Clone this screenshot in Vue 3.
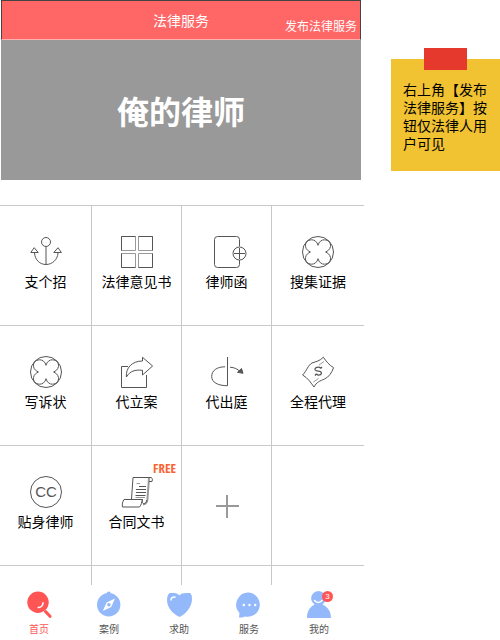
<script setup>
const services = [
  { icon: 'anchor', label: '支个招' },
  { icon: 'squares', label: '法律意见书' },
  { icon: 'letter', label: '律师函' },
  { icon: 'clover', label: '搜集证据' },
  { icon: 'clover', label: '写诉状' },
  { icon: 'share', label: '代立案' },
  { icon: 'rotate', label: '代出庭' },
  { icon: 'bill', label: '全程代理' },
  { icon: 'cc', label: '贴身律师' },
  { icon: 'scroll', label: '合同文书', tag: 'FREE' },
]

const tabs = [
  { icon: 'search', label: '首页', active: true },
  { icon: 'compass', label: '案例' },
  { icon: 'heart', label: '求助' },
  { icon: 'chat', label: '服务' },
  { icon: 'user', label: '我的', badge: 3 },
]
</script>

<template>
  <div class="page">
    <main class="phone">
      <header class="bar">
        <h1 class="bar-title">法律服务</h1>
        <a class="publish" href="#publish">发布法律服务</a>
      </header>
      <div class="banner">俺的律师</div>

      <div class="services">
        <button v-for="s in services" :key="s.label" class="cell" type="button">
          <svg v-if="s.icon === 'anchor'" class="icon" viewBox="0 0 32 32">
            <circle cx="16" cy="6" r="4.5" />
            <path d="M16 10.5V28.500M4.500 17C5 24 10 28.500 16 28.500S27.500 24 28 17M.8 16.500L4.200 11.700L8.200 16.500ZM23.800 16.500L28 11.700L31.400 16.500Z" />
          </svg>
          <svg v-else-if="s.icon === 'squares'" class="icon" viewBox="0 0 32 32">
            <path class="soft" d="M.5 .5h14v14h-14zM17.5 .5h14v14h-14zM.5 17.5h14v14h-14zM17.5 17.5h14v14h-14z" />
            <path d="M.5 14.5V.5H14.5M17.5 .5H31.5V14.5M.5 17.5V31.5H14.5M17.5 31.5H31.5V17.5" />
          </svg>
          <svg v-else-if="s.icon === 'letter'" class="icon wide" viewBox="0 0 40 32">
            <path d="M32.5 10.5V3.5a3 3 0 0 0-3-3H10.5a3 3 0 0 0-3 3V28.5a3 3 0 0 0 3 3H29.5a3 3 0 0 0 3-3V24" />
            <circle cx="32.5" cy="17.5" r="6.5" />
            <path d="M27 17.5H38M32.5 12V23" />
          </svg>
          <svg v-else-if="s.icon === 'clover'" class="icon" viewBox="0 0 32 32">
            <circle cx="16" cy="16" r="15.5" />
            <path d="M16 9.3C17 5.6 19.500 3.700 22.500 3.800C26.500 4 29 7 28.500 10.300C28 13.800 25.500 15 23.600 16C25.500 17 28 18.200 28.500 21.700C29 25 26.500 28 22.500 28.200C19.500 28.300 17 26.400 16 22.700C15 26.400 12.500 28.300 9.500 28.200C5.500 28 3 25 3.500 21.700C4 18.200 6.500 17 8.400 16C6.500 15 4 13.800 3.500 10.300C3 7 5.500 4 9.500 3.800C12.500 3.700 15 5.600 16 9.300Z" />
          </svg>
          <svg v-else-if="s.icon === 'share'" class="icon" viewBox="0 0 32 32">
            <path d="M7 10.5H.5V31.5H25.5V19" />
            <path d="M21.5 1.3L31.600 10L21.500 19V14.300C14 13.500 9 15 5.400 21C4.500 12 11 5 21.500 5Z" />
          </svg>
          <svg v-else-if="s.icon === 'rotate'" class="icon" viewBox="0 0 32 32">
            <path d="M16.5 1V29.700C7 29.700 .7 26.500 .7 20.500C.7 14.500 6 10.800 14 10.800M19 11.200C23.500 11.500 26.500 13 29 15.500" />
            <path class="solid" d="M32 17.3L26.500 16.300L30.500 12.500Z" />
          </svg>
          <svg v-else-if="s.icon === 'bill'" class="icon" viewBox="0 0 32 32">
            <path d="M.6 19C5 14.500 6 9 10 7C14 5.500 18 5 21.300 1.200C24 5 27 9 31.600 11.700C29.500 17 27 21 22.500 23C18 25 14.500 26 12 31C9 27 6 22 .6 19Z" />
            <path class="soft" d="M17 9L22 5.500M11.500 26L16.500 22.500" />
            <path class="mark" d="M18.8 12.300C17 10 12 11.500 13.200 14C14.400 16 18.500 14.300 19.300 16.500C20 19 16 20 14.500 17.800M18.800 12.300L20 10.800M14.500 17.800L13 19.500" />
          </svg>
          <svg v-else-if="s.icon === 'cc'" class="icon" viewBox="0 0 32 32">
            <circle cx="16" cy="16" r="15.5" />
            <text class="cc" x="16" y="21" text-anchor="middle">CC</text>
          </svg>
          <svg v-else class="icon" viewBox="0 0 32 32">
            <path class="soft thick" d="M28 2L26.5 22.500C26.500 26 25 28 22 28.500" />
            <path d="M10.5 23L12 1.500H29C31 1 32 3 31 5.500H28M3 23.500H21.500C20.500 26 20.500 29 18.500 31H1.500C1 28 1.500 26 3 23.500ZM21.500 23.500C20 29 25 29 26 24" />
            <path d="M18 10.5H25M15 13.500H25M15 16.500H25M14.500 19.500H24.500" />
            <path class="soft" d="M15.5 7.500H19M14.500 21.500H24" />
          </svg>
          <span class="label">{{ s.label }}</span>
          <span v-if="s.tag" class="tag">{{ s.tag }}</span>
        </button>
        <button class="cell add" type="button" aria-label="+">
          <svg class="plus" viewBox="0 0 24 24">
            <path d="M1 12H24M12 1V24" />
          </svg>
        </button>
        <div class="cell"></div>
        <div v-for="n in 4" :key="n" class="cell stub"></div>
      </div>

      <nav class="tabs">
        <a v-for="t in tabs" :key="t.label" class="tab" :class="{ active: t.active }" href="#">
          <svg v-if="t.icon === 'search'" class="tab-icon" viewBox="0 0 26 27">
            <circle cx="12" cy="11.300" r="10.700" />
            <path class="handle" d="M19.5 20.500L24 25.300" />
            <path class="cut" d="M17 11.800C17 14.800 15 16.600 12.200 16.400" />
          </svg>
          <svg v-else-if="t.icon === 'compass'" class="tab-icon" viewBox="0 0 26 27">
            <circle cx="12.7" cy="13.800" r="11.700" />
            <circle cx="12.7" cy="2.500" r="2" />
            <path class="hole" d="M19 7.500L15.200 16L6.800 20L10.600 11.600Z" />
            <circle cx="12.9" cy="13.800" r="1.800" />
          </svg>
          <svg v-else-if="t.icon === 'heart'" class="tab-icon" viewBox="0 0 26 27">
            <path d="M13.3 4.500C14.500 2.800 17 2 20 2H24C25.500 3 26 5 26 8C26 15 21 22.500 13.500 26C6 22.500 1 16 1 9C1 6 2 3.500 3.500 2H8C10.500 2 12.300 3 13.300 4.500Z" />
            <path class="cut" d="M5 9C5 7 6.500 5.800 9 6" />
          </svg>
          <svg v-else-if="t.icon === 'chat'" class="tab-icon" viewBox="0 0 26 27">
            <path d="M13.3 1.500A12.200 12.200 0 1 1 9 25.500C7 26.500 5 26.500 3 26.500L3.500 22A12.200 12.200 0 0 1 13.300 1.500Z" />
            <g class="hole">
              <circle cx="7.8" cy="14" r="1.200" />
              <circle cx="13.5" cy="14" r="1.200" />
              <circle cx="19.2" cy="14" r="1.200" />
            </g>
          </svg>
          <svg v-else class="tab-icon" viewBox="0 0 26 27">
            <path d="M1 27C1 20 4 16 8.500 13.500A7.300 7.300 0 1 1 16.500 13.500C21.500 16 25 20 25 27Z" />
            <path class="cut" d="M8.5 9.500C10.500 12 14 12 16 9.500" />
          </svg>
          <span class="tab-label">{{ t.label }}</span>
          <span v-if="t.badge" class="badge">{{ t.badge }}</span>
        </a>
      </nav>
    </main>

    <aside class="side">
      <p class="note">右上角【发布法律服务】按钮仅法律人用户可见</p>
    </aside>
  </div>
</template>

<style>
body {
  margin: 0;
  background: #fff;
}
</style>

<style scoped>
.page {
  display: grid;
  grid-template-columns: 364fr 136fr;
  align-items: start;
  color: #000;
  font: 14px/18px "Noto Sans CJK SC", sans-serif;
}

.bar {
  position: relative;
  display: flex;
  align-items: center;
  justify-content: center;
  box-sizing: border-box;
  height: 40px;
  margin: 0 3px 0 1px;
  border: 1px solid #444;
  border-bottom-color: #ffb0b0;
  background: #f66;
  color: #fff;
}

.bar-title {
  margin: 0;
  font-size: 14px;
  font-weight: 400;
}

.publish {
  position: absolute;
  right: 3px;
  bottom: 4px;
  color: #fff;
  font-size: 12px;
  text-decoration: none;
}

.banner {
  display: flex;
  align-items: center;
  justify-content: center;
  height: 140px;
  margin: 0 3px 25px 1px;
  background: #999;
  color: #fff;
  font-size: 32px;
  font-weight: 700;
  line-height: 40px;
}

.services {
  display: grid;
  grid-template-columns: 92fr 90fr 90fr 92fr;
}

.cell {
  position: relative;
  display: flex;
  flex-direction: column;
  align-items: center;
  gap: 4px;
  box-sizing: border-box;
  min-width: 0;
  height: 120px;
  margin: 0;
  padding: 30px 0 0;
  border: 0 solid #c8c8c8;
  border-width: 1px 1px 0 0;
  background: none;
  color: inherit;
  font: inherit;
}

.cell:nth-child(4n) {
  border-right-width: 0;
}

.stub {
  height: 20px;
  padding: 0;
}

.add {
  justify-content: center;
  padding: 0;
}

.icon {
  display: block;
  width: 32px;
  height: 32px;
  overflow: visible;
  fill: none;
  stroke: #555;
  stroke-width: 1;
}

.wide {
  width: 40px;
}

.icon .soft {
  stroke: #999;
}

.icon .thick {
  stroke-width: 2;
}

.icon .mark {
  stroke-width: 1.3;
}

.icon .solid {
  fill: #555;
}

.icon .cc {
  fill: #555;
  stroke: none;
  font: 15px "Liberation Sans", sans-serif;
}

.label {
  white-space: nowrap;
}

.tag {
  position: absolute;
  top: 14px;
  right: 5px;
  color: #f96332;
  font: 700 13px/16px "Liberation Sans Narrow", "Open Sans Condensed", "Liberation Sans", sans-serif;
}

.plus {
  width: 24px;
  height: 24px;
  fill: none;
  stroke: #999;
  stroke-width: 2;
}

.tabs {
  display: grid;
  grid-template-columns: repeat(5, 1fr);
  margin: 0 10px 0 4px;
  padding: 6px 0 2px;
}

.tab {
  position: relative;
  display: flex;
  flex-direction: column;
  align-items: center;
  gap: 4px;
  color: #555;
  font-size: 10px;
  line-height: 14px;
  text-decoration: none;
}

.tab.active {
  color: #f55;
}

.tab-icon {
  display: block;
  width: 26px;
  height: 27px;
  fill: #94b9fb;
}

.active .tab-icon {
  fill: #f55;
}

.handle {
  stroke: #f55;
  stroke-width: 3;
  stroke-linecap: round;
}

.cut {
  fill: none;
  stroke: #fff;
  stroke-width: 1.5;
  stroke-linecap: round;
}

.tab-icon .hole {
  fill: #fff;
}

.badge {
  position: absolute;
  top: 0;
  left: calc(50% + 3px);
  width: 11px;
  height: 11px;
  border-radius: 50%;
  background: #f55;
  color: #fff;
  font: 8px/11px "Liberation Sans", sans-serif;
  text-align: center;
}

.side {
  padding: 59px 0 0 27px;
}

.note {
  position: relative;
  margin: 0;
  padding: 21px 12px 19px;
  background: #f1c232;
}

.note::before {
  content: "";
  position: absolute;
  top: -11px;
  left: 33px;
  width: 43px;
  height: 22px;
  background: #e6392e;
}
</style>
